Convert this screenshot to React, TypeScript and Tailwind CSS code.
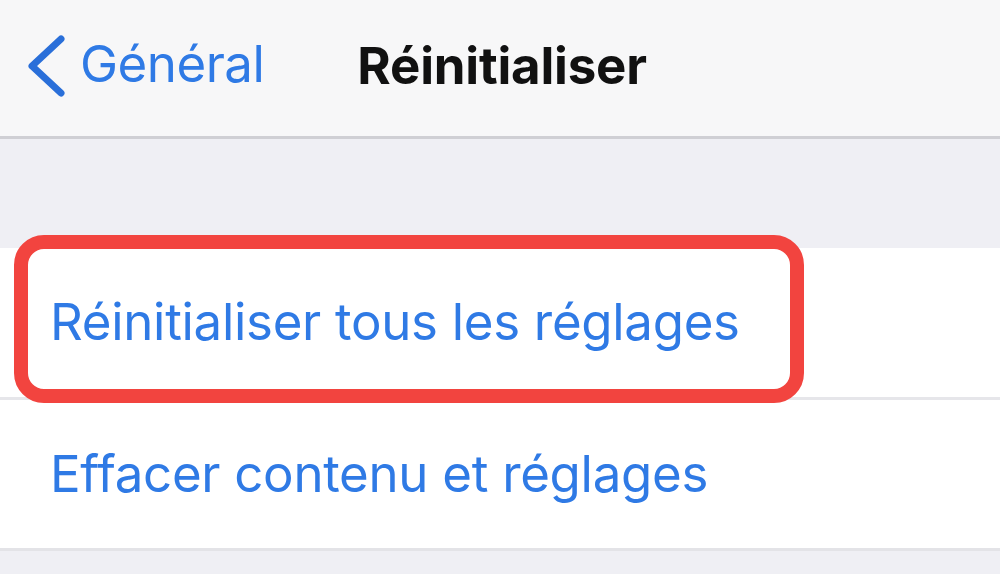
export default function App() {
  return (
    <main className="min-h-[574px] w-[1000px] overflow-hidden bg-[#efeff4] font-['Inter','Liberation_Sans',sans-serif]">
      <header className="flex h-[139px] items-center border-b-[3px] border-[#cfcfd4] bg-[#f7f7f8] pb-[8px]">
        <button type="button" className="flex items-center pl-[25px] text-[#2f7ae5]">
          <svg width="42" height="66" viewBox="0 0 42 66" fill="none" className="mt-[4px]">
            <polyline
              points="36,6 7,33 36,60"
              stroke="#2a6fd9"
              strokeWidth="7"
              strokeLinecap="round"
              strokeLinejoin="round"
            />
          </svg>
          <span className="ml-[13px] text-[51px] tracking-[-0.5px]">Général</span>
        </button>
        <h1 className="ml-[93px] mt-[4px] text-[51px] font-bold tracking-[-0.2px] text-[#111111]">Réinitialiser</h1>
      </header>

      <div className="h-[109px]" />

      <section className="relative bg-white">
        <div className="flex h-[149px] items-center pl-[50px] text-[51px] tracking-[-0.3px] text-[#2f7ae5]">
          Réinitialiser tous les réglages
        </div>
        <div className="h-[3px] bg-[#e6e6ea]" />
        <div className="flex h-[148px] items-center pl-[50px] text-[51px] tracking-[-0.3px] text-[#2f7ae5]">
          Effacer contenu et réglages
        </div>
        <div className="h-[3px] bg-[#e3e3e7]" />

        <div className="pointer-events-none absolute left-[14px] top-[-13px] h-[168px] w-[790px] rounded-[30px] border-[14px] border-[#f2443f]" />
      </section>
    </main>
  );
}
